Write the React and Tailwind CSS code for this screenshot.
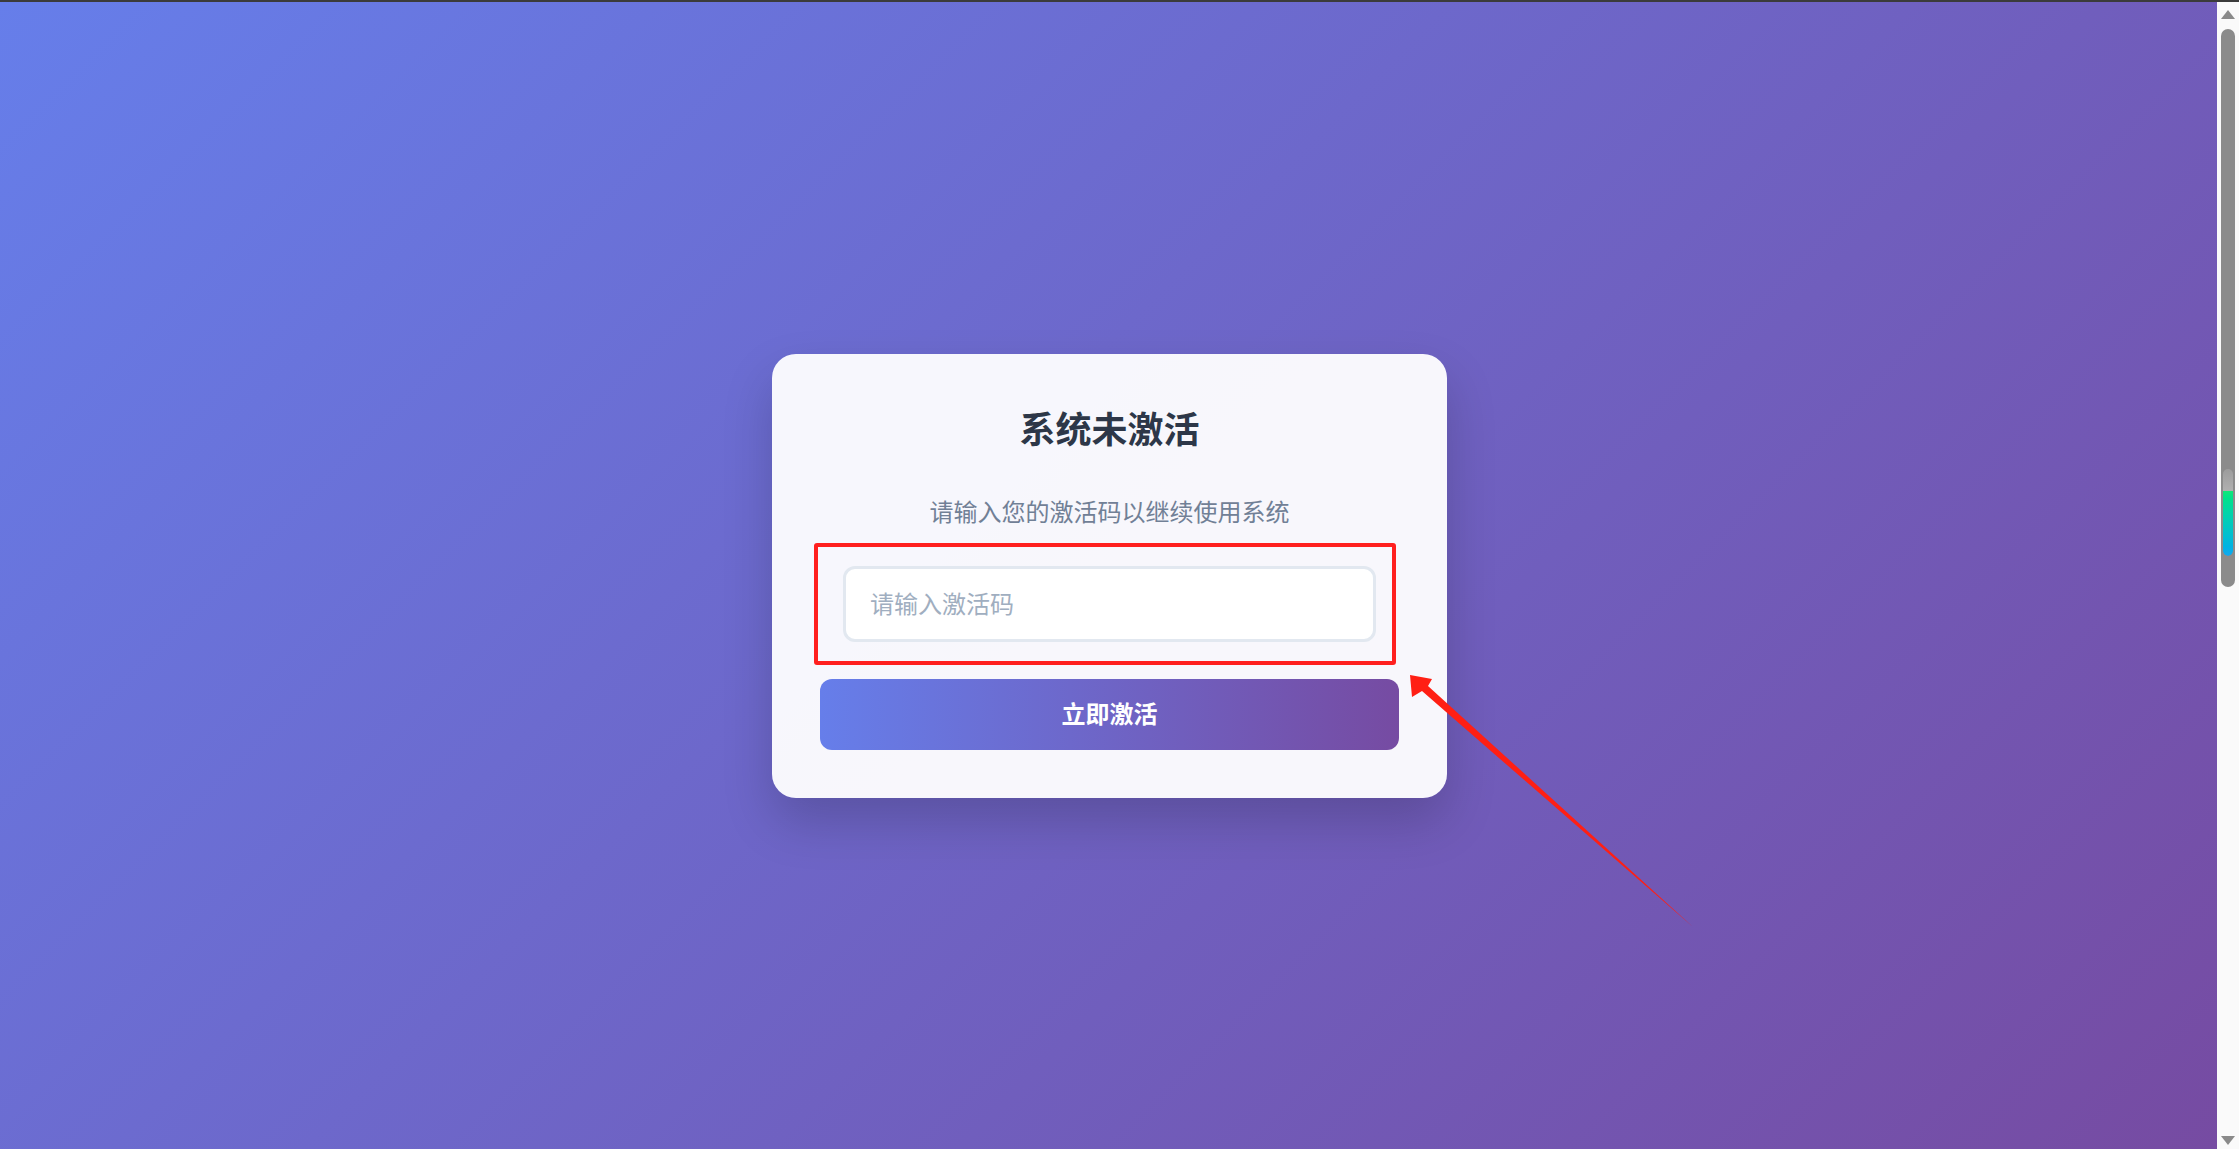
import { useState } from "react";

const Arrow = () => (
  <svg
    className="absolute inset-0 pointer-events-none"
    width="2217"
    height="1147"
    viewBox="0 0 2217 1147"
  >
    <polygon
      points="1410,673 1432,677 1428,684 1693,925 1422,689 1412,695"
      fill="#ff1f14"
    />
  </svg>
);

const Scrollbar = () => (
  <div className="w-[22px] h-full bg-[#fafafa] flex flex-col items-center relative">
    <div className="mt-[8px] w-0 h-0 border-l-[7px] border-r-[7px] border-b-[9px] border-l-transparent border-r-transparent border-b-[#8a8a8a]" />
    <div className="mt-[10px] w-[14px] h-[558px] rounded-full bg-[#8b8b8b] flex flex-col items-center pt-[440px]">
      <div className="w-[10px] h-[87px] rounded-full overflow-hidden flex flex-col">
        <div className="h-[22px] bg-gradient-to-b from-[#9c9c9c] to-[#b0b0b0]" />
        <div className="flex-1 bg-gradient-to-b from-[#10e878] to-[#12a8f0] rounded-b-full" />
      </div>
    </div>
    <div className="flex-1" />
    <div className="mb-[4px] w-0 h-0 border-l-[7px] border-r-[7px] border-t-[9px] border-l-transparent border-r-transparent border-t-[#8a8a8a]" />
  </div>
);

export default function App() {
  const [code, setCode] = useState("");

  return (
    <div
      className="w-[2239px] h-[1149px] flex flex-col overflow-hidden"
      style={{ fontFamily: '"Noto Sans", "Noto Sans CJK SC", sans-serif' }}
    >
      <div className="h-[2px] bg-[#3b3b3b]" />
      <div className="flex-1 flex">
        <div className="relative flex-1 flex items-center justify-center bg-[linear-gradient(135deg,#667eea_0%,#764ba2_100%)]">
          <div className="w-[675px] ml-[2px] rounded-[24px] bg-white/95 px-[48px] pt-[48px] pb-[48px] shadow-[0_24px_50px_rgba(0,0,0,0.18)] flex flex-col items-center">
            <h2 className="text-[36px] leading-[56px] font-bold text-[#2d3748]">
              系统未激活
            </h2>
            <p className="mt-[36px] text-[24px] leading-[36px] text-[#718096]">
              请输入您的激活码以继续使用系统
            </p>
            <div className="mt-[13px] self-start -ml-[6px] w-[582px] border-[4px] border-[#ff1f1f] rounded-[3px] pl-[25px] pr-[16px] py-[19px]">
              <input
                value={code}
                onChange={(e) => setCode(e.target.value)}
                placeholder="请输入激活码"
                className="w-full h-[76px] bg-white border-[3px] border-[#e2e8f0] rounded-[12px] px-[24px] text-[24px] text-[#2d3748] placeholder:text-[#a0aec0] outline-none"
              />
            </div>
            <button className="mt-[14px] w-full h-[71px] rounded-[12px] bg-[linear-gradient(90deg,#667eea_0%,#764ba2_100%)] text-white text-[24px] font-bold">
              立即激活
            </button>
          </div>
          <Arrow />
        </div>
        <Scrollbar />
      </div>
    </div>
  );
}
